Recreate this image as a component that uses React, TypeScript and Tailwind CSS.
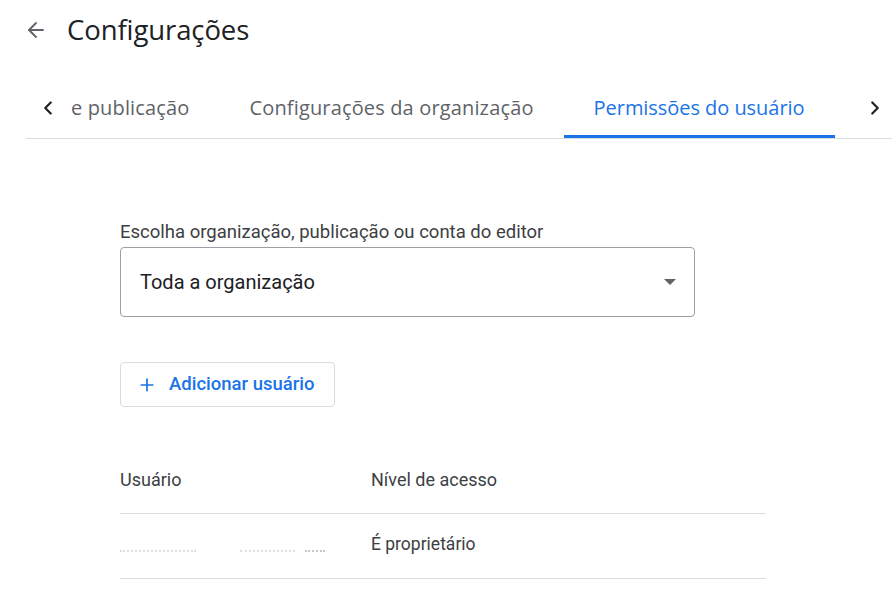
import React from "react";
import { ChevronLeft, ChevronRight, ArrowLeft, Plus } from "lucide-react";

const tabs = [
  { label: "e publicação", active: false },
  { label: "Configurações da organização", active: false },
  { label: "Permissões do usuário", active: true },
];

const App: React.FC = () => {
  return (
    <div className="h-[593px] w-[892px] overflow-hidden bg-white font-['Roboto',sans-serif] text-[#202124]">
      {/* header */}
      <div className="flex h-[60px] items-center pl-[24px]">
        <ArrowLeft className="h-[24px] w-[24px] text-[#5f6368]" strokeWidth={1.8} />
        <h1 className="ml-[19px] font-['Open_Sans',sans-serif] text-[27.5px] leading-none tracking-[-0.1px]">
          Configurações
        </h1>
      </div>

      {/* tabs */}
      <div className="ml-[26px] mt-[18px] flex h-[61px] items-stretch border-b border-[#dadce0]">
        <button className="flex w-[44px] shrink-0 items-center justify-center">
          <ChevronLeft className="h-[22px] w-[22px] text-[#202124]" strokeWidth={2.4} />
        </button>
        <div className="flex flex-1 overflow-hidden">
          {tabs.map((tab) => (
            <div
              key={tab.label}
              className={
                tab.active
                  ? "flex shrink-0 items-center border-b-[3px] border-[#1a73e8] px-[30px] pt-[3px] font-['Open_Sans',sans-serif] text-[20px] tracking-[-0.05px] text-[#1a73e8]"
                  : "flex shrink-0 items-center border-b-[3px] border-transparent px-[30px] pt-[3px] font-['Open_Sans',sans-serif] text-[20px] tracking-[0.15px] text-[#5f6368] first:pl-[1px]"
              }
            >
              {tab.label}
            </div>
          ))}
        </div>
        <button className="flex w-[34px] shrink-0 items-center justify-center">
          <ChevronRight className="h-[22px] w-[22px] text-[#202124]" strokeWidth={2.4} />
        </button>
      </div>

      {/* content */}
      <div className="ml-[120px] w-[646px] pt-[82px]">
        <div className="text-[18.5px] leading-[22px] text-[#3c4043]">
          Escolha organização, publicação ou conta do editor
        </div>
        <div className="mt-[4px] flex h-[70px] w-[575px] items-center justify-between rounded-[4px] border border-[#9aa0a6] pl-[19px] pr-[18px]">
          <span className="text-[20px] text-[#202124]">Toda a organização</span>
          <span className="h-0 w-0 border-x-[6px] border-t-[6px] border-x-transparent border-t-[#5f6368]" />
        </div>

        <button className="mt-[45px] flex h-[45px] items-center gap-[12px] rounded-[4px] border border-[#dadce0] pl-[16px] pr-[19px] text-[18.5px] font-medium text-[#1a73e8]">
          <Plus className="h-[20px] w-[20px]" strokeWidth={2} />
          Adicionar usuário
        </button>

        {/* table */}
        <div className="mt-[50px]">
          <div className="flex h-[57px] items-center border-b border-[#dadce0] pb-[12px] text-[18px] text-[#3c4043]">
            <div className="w-[251px]">Usuário</div>
            <div>Nível de acesso</div>
          </div>
          <div className="flex h-[65px] items-center border-b border-[#dadce0] pb-[4px] text-[17.5px] text-[#3c4043]">
            <div className="flex w-[251px] items-center pt-[14px]">
              <span className="block w-[76px] border-b-2 border-dotted border-[#dcdee2]" />
              <span className="ml-[44px] block w-[55px] border-b-2 border-dotted border-[#dcdee2]" />
              <span className="ml-[10px] block w-[20px] border-b-2 border-dotted border-[#c4c7cc]" />
            </div>
            <div>É proprietário</div>
          </div>
        </div>
      </div>
    </div>
  );
};

export default App;
